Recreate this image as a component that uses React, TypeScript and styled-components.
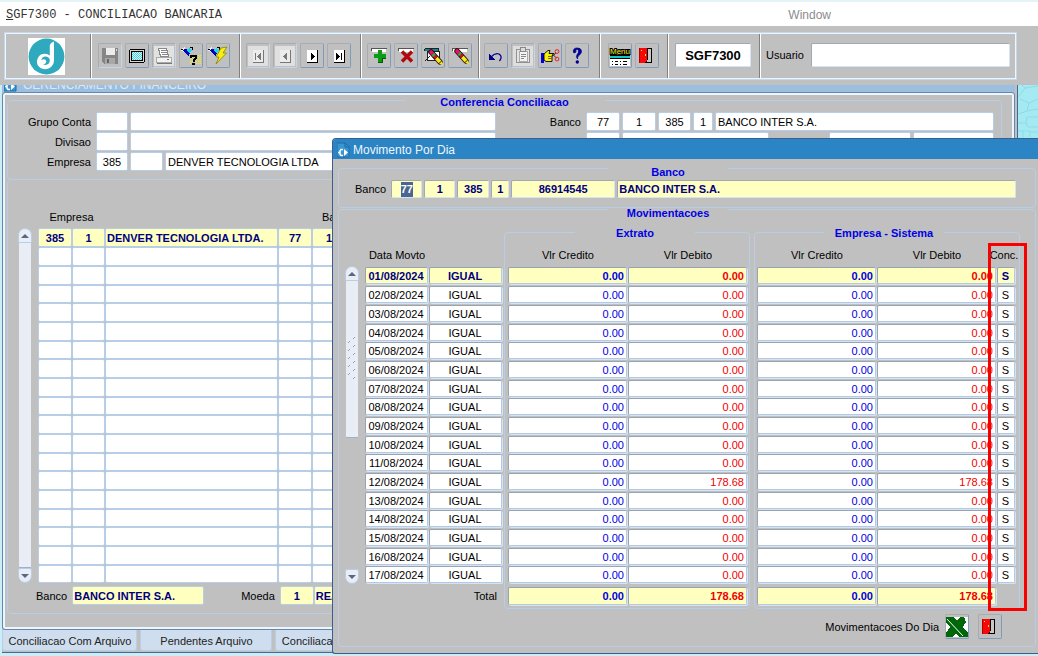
import React from "react";
import styled, { createGlobalStyle, css } from "styled-components";

const GREY = "#c0c0c0";
const LINE = "#b8cde6";

const Global = createGlobalStyle`
  * { box-sizing: border-box; }
  body { margin: 0; background: ${GREY}; font: 11px/12px "Liberation Sans", Arial, sans-serif; color: #000; }
  input, button { font: inherit; color: inherit; margin: 0; }
  fieldset { min-width: 0; margin: 0; padding: 0; }
  table { border-collapse: separate; border-spacing: 0; table-layout: fixed; }
  th { font-weight: normal; }
  td, th { padding: 0; }
  svg { display: block; flex: none; }
`;

const Page = styled.div`
  display: flex;
  flex-direction: column;
  min-height: 100vh;
  overflow: hidden;
`;

const MenuBar = styled.header`
  display: flex;
  align-items: center;
  height: 26px;
  padding: 2px 6px 0;
  border-top: 2px solid #e4f4f6;
  background: #fff;
`;
const MenuTitle = styled.h1`
  flex: 1;
  margin: 0;
  font: 12px/14px "Liberation Mono", "Courier New", monospace;
  color: #333;
`;
const WindowMenu = styled.button`
  flex: none;
  margin-right: 201px;
  padding: 0;
  border: 0;
  background: none;
  font-size: 12px;
  line-height: 14px;
  color: #8c8c8c;
`;

const ToolBar = styled.div`
  display: flex;
  height: 48px;
  margin: 6px 21px 5px 4px;
  border: 1px solid #c3d8ee;
  box-shadow: inset 0 0 0 1px #eef5fb;
  padding: 1px;
`;
const ToolGroup = styled.div<{ $w?: number; $pad?: number }>`
  display: flex;
  align-items: flex-start;
  gap: 3px;
  ${(p) => (p.$w ? `width: ${p.$w}px; flex: none;` : "flex: 1;")}
  padding: 9px 0 0 ${(p) => p.$pad ?? 6}px;
  & + & { border-left: 1px solid #808080; box-shadow: inset 1px 0 0 #fff; }
`;
const LogoBox = styled.div`
  width: 37px;
  height: 37px;
  margin-top: -5px;
`;
const ToolButton = styled.button<{ $off?: boolean }>`
  display: grid;
  place-items: center;
  flex: none;
  width: 24px;
  height: 25px;
  padding: 0;
  border: 1px solid;
  border-color: ${(p) => (p.$off ? "#a8acb0 #c3d5e8 #c3d5e8 #a8acb0" : "#a8acb0 #7d9cbd #7d9cbd #a8acb0")};
  border-radius: 2px;
  background: ${GREY};
`;

const Field = styled.input<{ $w?: number; $h?: number; $hot?: boolean; $center?: boolean; $sunk?: boolean; $big?: boolean }>`
  display: block;
  ${(p) => (p.$w ? `width: ${p.$w}px; flex: none;` : "flex: 1; width: 0;")}
  height: ${(p) => p.$h ?? 19}px;
  padding: 0 ${(p) => (p.$hot ? 1 : 2)}px;
  border: 1px solid ${LINE};
  border-radius: 2px;
  outline: 0;
  background: ${(p) => (p.$hot ? "#ffffc0" : "#fff")};
  text-align: ${(p) => (p.$center ? "center" : "left")};
  ${(p) => p.$hot && css`font-weight: bold; color: #000080;`}
  ${(p) => p.$sunk && css`border-color: #a0a8b2 #d5e4f3 #d5e4f3 #a0a8b2;`}
  ${(p) => p.$big && css`font-size: 13px; font-weight: bold;`}
`;

const UserLabel = styled.label`
  display: flex;
  align-items: center;
  gap: 7px;
  flex: 1;
  padding-right: 5px;
`;

const Desktop = styled.main`
  position: relative;
  flex: 1;
  display: flex;
  padding-left: 2px;
  overflow: hidden;
  background: #c9eef5;
`;
const MainWindow = styled.section`
  display: flex;
  flex-direction: column;
  flex: 1;
  min-width: 0;
  align-self: flex-start;
  padding-right: 2px;
  border: solid #466a96;
  border-width: 0 1px 1px 0;
  background: ${GREY};
`;
const ClippedTitle = styled.div`
  display: flex;
  align-items: flex-end;
  gap: 6px;
  height: 7px;
  padding-left: 2px;
  overflow: hidden;
  background: #9cbfdf;
  color: #dbe9f5;
  font-size: 12px;
  line-height: 14px;
`;
const WindowBody = styled.div`
  padding: 2px 12px 15px 4px;
  border: 1px solid #6687ad;
  border-radius: 3px;
  box-shadow: inset 0 0 0 2px #eef5fb;
`;

const Group = styled.fieldset<{ $up?: number; $w?: number }>`
  margin-top: ${(p) => -(p.$up ?? 0)}px;
  ${(p) => p.$w && `width: ${p.$w}px; flex: none;`}
  border: 1px solid ${LINE};
  border-radius: 4px;
`;
const Legend = styled.legend<{ $w: number; $drop?: number; $left?: number }>`
  width: ${(p) => p.$w}px;
  margin-left: ${(p) => (p.$left === undefined ? "auto" : `${p.$left}px`)};
  margin-right: auto;
  padding: ${(p) => p.$drop ?? 0}px 0 0;
  color: #0000e6;
  font-weight: bold;
  text-align: center;
`;

const Columns = styled.div`
  display: flex;
  justify-content: space-between;
  padding: 4px 7px 8px 0;
`;
const Stack = styled.div`
  display: flex;
  flex-direction: column;
  gap: 1px;
`;
const Line = styled.div<{ $gap?: number }>`
  display: flex;
  align-items: center;
  gap: ${(p) => p.$gap ?? 2}px;
`;
const Caption = styled.label<{ $w?: number }>`
  flex: none;
  ${(p) => p.$w && `width: ${p.$w}px;`}
  padding-right: 3px;
  text-align: right;
  white-space: nowrap;
`;
const Spacer = styled.span<{ $w: number }>`
  flex: none;
  width: ${(p) => p.$w}px;
`;

const BackPanel = styled.section`
  margin-top: -1px;
  padding-bottom: 8px;
  border: 1px solid ${LINE};
  border-radius: 4px;
  overflow: hidden;
`;
const GridArea = styled.div`
  display: flex;
  align-items: stretch;
  gap: 6px;
  padding-left: 10px;
`;
const Bar = styled.div<{ $top: number }>`
  display: flex;
  flex-direction: column;
  flex: none;
  width: 14px;
  margin-top: ${(p) => p.$top}px;
`;
const BarArrow = styled.button<{ $down?: boolean }>`
  display: grid;
  place-items: center;
  flex: none;
  height: 15px;
  padding: 0;
  border: 1px solid ${LINE};
  border-radius: ${(p) => (p.$down ? "2px 2px 7px 7px" : "7px 7px 1px 1px")};
  background: #e8edf6;
`;
const BarThumb = styled.div<{ $h?: number }>`
  display: grid;
  place-items: center;
  ${(p) => (p.$h ? `height: ${p.$h}px;` : "flex: 1;")}
  margin: 0 1px;
  border-bottom: 1px solid #9fb2cc;
  background: #e8edf6;
`;
const BarRest = styled.div`
  flex: none;
  height: 131px;
`;

const Sheet = styled.table<{ $w: number }>`
  width: ${(p) => p.$w}px;
  flex: none;
  tbody tr { height: 19px; }
  tbody tr:nth-child(3n + 4) { height: 18px; }
`;
const Head = styled.th<{ $h: number; $left?: number }>`
  height: ${(p) => p.$h}px;
  padding: 0 0 5px ${(p) => p.$left ?? 0}px;
  vertical-align: bottom;
  text-align: ${(p) => (p.$left ? "left" : "center")};
  white-space: nowrap;
`;
const PlainCell = styled.td`
  height: inherit;
  input { width: 100%; height: 100%; min-height: 18px; }
`;
const SunkCell = styled.td`
  padding: 1px 1px 0 0;
  vertical-align: top;
`;
const FootCell = styled.td`
  height: 21px;
  padding-right: 1px;
  vertical-align: bottom;
`;
const TotalCell = styled.td`
  height: 21px;
  padding: 2px 6px 0 0;
  text-align: right;
`;
const CellInput = styled.input<{ $tone?: "credit" | "debit"; $hot?: boolean; $tall?: boolean }>`
  display: block;
  width: 100%;
  height: ${(p) => (p.$tall ? 18 : 17)}px;
  padding: 0 ${(p) => (p.$tone ? 2 : 1)}px 0 0;
  border: 1px solid;
  border-color: #9aa4b0 #b4cae4 #b4cae4 #9aa4b0;
  border-radius: 2px;
  outline: 0;
  box-shadow: 1px 1px 0 #d6e4f2;
  background: ${(p) => (p.$hot ? "#ffffc0" : "#fff")};
  text-align: ${(p) => (p.$tone ? "right" : "center")};
  font-weight: ${(p) => (p.$hot ? "bold" : "normal")};
  color: ${(p) => (p.$tone === "credit" ? "#0000e0" : p.$tone === "debit" ? "#f00000" : p.$hot ? "#000080" : "#000")};
`;
const ConcText = styled.span`
  display: flex;
  justify-content: center;
  margin-right: 5px;
`;

const BottomLine = styled(Line)`
  padding: 3px 0 0 28px;
`;
const Tabs = styled.nav`
  display: flex;
  gap: 3px;
  padding-bottom: 1px;
`;
const Tab = styled.button<{ $w: number }>`
  flex: none;
  width: ${(p) => p.$w}px;
  height: 21px;
  padding: 1px 0 0 1px;
  border: 1px solid ${LINE};
  border-top: 0;
  border-radius: 0 0 3px 3px;
  background: #cfdeee;
  color: #222;
`;

const Dialog = styled.section`
  position: absolute;
  top: 53px;
  left: 332px;
  right: 0;
  border: 1px solid #3a5f8f;
  border-right: 0;
  border-radius: 4px 0 0 3px;
  background: ${GREY};
  overflow: hidden;
`;
const DialogTitle = styled.h2`
  display: flex;
  align-items: center;
  gap: 3px;
  height: 20px;
  margin: 0;
  padding: 2px 0 0 4px;
  background: #2b84c4;
  color: #eef6fc;
  font-size: 12px;
  font-weight: normal;
  line-height: 14px;
`;
const DialogBody = styled.div`
  padding: 0 2px 6px 5px;
`;
const BankLine = styled(Line)`
  padding: 2px 19px 9px 16px;
`;
const Tables = styled.div`
  display: flex;
  align-items: flex-start;
  padding: 7px 0 0 6px;
`;
const DaySheet = styled(Sheet)`
  margin: 12px 1px 0 6px;
`;
const TableGroup = styled(Group)`
  padding: 0 0 3px ${(p) => (p.$w === 246 ? 3 : 2)}px;
  & + & { margin-left: 4px; }
`;
const DialogFoot = styled.div`
  display: flex;
  justify-content: flex-end;
  align-items: center;
  gap: 9px;
  padding: 5px 33px 7px 0;
`;
const FootLabel = styled.span`
  margin-right: -3px;
`;
const Highlight = styled.div`
  position: absolute;
  left: 655px;
  top: 104px;
  width: 39px;
  height: 368px;
  border: 3px solid #f80000;
`;
const SelectedField = styled.div`
  display: grid;
  place-items: center;
  flex: none;
  width: 31px;
  height: 18px;
  border: 1px solid;
  border-color: #a0a8b2 #d5e4f3 #d5e4f3 #a0a8b2;
  border-radius: 2px;
  background: #ffffc0;
`;
const SelectedInput = styled.input`
  width: 12px;
  height: 15px;
  padding: 0;
  border: 0;
  outline: 0;
  background: #4a6591;
  color: #fff;
  font-weight: bold;
  text-align: center;
`;

/* ---------- drawings ---------- */

const Ico = ({ children, size = 20 }: { children: React.ReactNode; size?: number }) => (
  <svg width={size} height={size} viewBox={`0 0 ${size} ${size}`} shapeRendering="crispEdges" aria-hidden="true">
    {children}
  </svg>
);

const Logo = () => (
  <svg width="37" height="37" viewBox="0 0 37 37" role="img" aria-label="Denver">
    <rect width="37" height="37" fill="#fff" />
    <circle cx="18.5" cy="18.5" r="17.9" fill="#2fa9bd" />
    <path d="M21.800 7.500Q22.500 4.500 26 3.500V23A8.600 8.600 0 0 1 17.400 31.200C12 31.200 8.800 27.500 9 23.500C9.200 19 12.500 15.500 17 15.800Q20 16 21.800 17.500Z" fill="#fff" />
    <path d="M21.800 21.500Q20.500 18.300 17 18.500Q13.500 19 13.400 22.200Q15.500 20.500 17.500 21.800Q19 23.200 17.800 25Q16.800 26.300 15 26.200Q18 27.800 20.500 25.800Q22 24.300 21.800 21.500Z" fill="#2fa9bd" />
  </svg>
);

const Save = () => (
  <Ico><path d="M2 2H18V18H4L2 16Z" fill="#868686" /><rect x="6" y="2" width="9" height="7" fill="#ececec" /><rect x="5" y="12" width="10" height="6" fill="#a8a8a8" /><rect x="7" y="13" width="2" height="4" fill="#666" /><path d="M16.500 3V5" stroke="#ddd" /></Ico>
);
const Screen = () => (
  <Ico><rect x="2" y="3" width="16" height="14" rx="2" fill="#000" /><rect x="3" y="4" width="14" height="12" fill="#d8d8d8" /><rect x="4" y="5" width="12" height="10" fill="#000" /><rect x="5" y="6" width="10" height="8" fill="#f6eef4" />
    {[6, 8, 10, 12].map((y) => <path key={y} d={`M5 ${y}.5H15M6 ${y + 1}.5H15`} stroke="#30dce8" strokeDasharray="1 1" />)}
  </Ico>
);
const Printer = () => (
  <Ico><rect width="20" height="20" fill="#e2e2e2" /><path d="M4.500 2.500H12.500L14.500 10.500H6.500Z" fill="#fff" stroke="#888" /><path d="M7 4.500H12M7 6.500H13M8 8.500H13" stroke="#888" /><path d="M2.500 11.500H17.500V16.500H2.500Z" fill="#f2f2f2" stroke="#aaa" /><path d="M3 17.500H18M13 13.500H15" stroke="#777" /></Ico>
);
const Torch = () => (
  <><path d="M1 2L4 1L3 6L0 5Z" fill="#eee" /><path d="M3 3L6 3L9 6L8 10L5 8L2 5Z" fill="#0000b8" /><path d="M5 4L9 2L11 5L8 7Z" fill="#10dce8" /><path d="M0 3.500H2M9 1.500H11V4" stroke="#000" fill="none" /></>
);
const QueryEnter = () => (
  <Ico>
    {[9, 11, 13, 15, 17].map((y) => <path key={y} d={`M9 ${y}.5H20`} stroke="#f6f010" strokeDasharray="1 1" />)}
    {[10, 12, 14, 16].map((y) => <path key={y} d={`M10 ${y}.5H20`} stroke="#e4dc70" strokeDasharray="1 3" />)}
    <Torch /><path d="M10 12V9.500H15V12L12.500 14V16" fill="none" stroke="#000" strokeWidth="2" /><rect x="11" y="17" width="3" height="2" fill="#000" />
  </Ico>
);
const QueryRun = () => (
  <Ico><Torch /><path d="M13 2L19 1L15 7H18.500L8 18L11 11H8Z" fill="#f8ee10" stroke="#8a8200" strokeWidth="0.800" shapeRendering="auto" /></Ico>
);
const Nav = ({ d, off }: { d: string; off?: boolean }) => (
  <Ico>{off && <rect width="20" height="20" fill="#e0e0e0" />}<rect x="5" y="4" width="10" height="12" fill={off ? "#ececec" : "#fff"} /><path d="M5 16.500H15.500V4" fill="none" stroke={off ? "#777" : "#000"} /><path d={d} fill={off ? "#777" : "#000"} /></Ico>
);
const Strip = () => (
  <><path d="M2 5V2.500H18" fill="none" stroke="#555" /><rect x="3" y="3" width="14" height="3" fill="#fff" /></>
);
const Insert = () => (
  <Ico><Strip /><path d="M9 4H13V8H17V12H13V16H9V12H5V8H9Z" fill="#0a9c14" /><path d="M13 12.500H17M9 16.500H13.500V12" stroke="#045c08" fill="none" /></Ico>
);
const Remove = () => (
  <Ico><Strip /><path d="M6 5.500L16 15.500M16 5.500L6 15.500" stroke="#b00810" strokeWidth="3.500" shapeRendering="auto" /></Ico>
);
const Pencil = () => (
  <g shapeRendering="auto"><path d="M6 5L15 15" stroke="#301010" strokeWidth="5.500" strokeLinecap="round" /><path d="M6 5L9 8.300" stroke="#e8106c" strokeWidth="3.600" strokeLinecap="round" /><path d="M8 7.200L9.300 8.700" stroke="#10c030" strokeWidth="3.600" /><path d="M9.800 9.200L11 10.500" stroke="#d81020" strokeWidth="3.600" /><path d="M11.300 11L15 15" stroke="#f4ec20" strokeWidth="3.600" /><path d="M14 17L18 18L17 14Z" fill="#f4ec20" /></g>
);
const ClearBlock = () => (
  <Ico><path d="M1.500 2.500H15.500V5M1.500 2.500V5" fill="none" stroke="#222" /><rect x="2" y="3" width="13" height="2" fill="#0a8a90" /><rect x="4.500" y="5.500" width="12" height="9" fill="#fff" stroke="#222" /><path d="M2 15L7 10" stroke="#222" /><g transform="translate(2 1)"><Pencil /></g></Ico>
);
const ClearLine = () => (
  <Ico><Strip /><g transform="translate(1 0)"><Pencil /></g></Ico>
);
const Undo = () => (
  <Ico><path d="M5 11Q9 6.500 13 8Q17 10.500 13.500 15" fill="none" stroke="#000090" strokeWidth="1.300" shapeRendering="auto" /><path d="M3 8V14H9Z" fill="#000090" /></Ico>
);
const Paste = () => (
  <Ico><rect width="20" height="20" fill="#dedede" /><rect x="3.500" y="3.500" width="13" height="13" rx="1" fill="#e4e4e4" stroke="#929292" /><rect x="6.500" y="5.500" width="8" height="10" fill="#f4f4f4" stroke="#aaa" /><rect x="7.500" y="1.500" width="5" height="4" fill="#ddd" stroke="#888" /><path d="M8 8.500H13M8 10.500H13M8 12.500H11" stroke="#888" /></Ico>
);
const HandCut = () => (
  <Ico><rect x="1" y="7" width="3" height="10" fill="#0000d8" /><path d="M4 8L8 4.500H10L9 7.500H14V9.500H12V15.500H6L4 14Z" fill="#f6ee10" stroke="#000" strokeWidth="0.900" shapeRendering="auto" /><path d="M8 10.500H12M8 12.500H12" stroke="#806800" /><path d="M12 10.500L16 7M12 8L16.500 12" stroke="#444" shapeRendering="auto" /><circle cx="17" cy="5.500" r="1.900" fill="none" stroke="#f02020" shapeRendering="auto" /><circle cx="17" cy="13" r="1.900" fill="none" stroke="#f02020" shapeRendering="auto" /></Ico>
);
const Help = () => (
  <Ico><g shapeRendering="auto"><path d="M6.500 6.500Q5.500 2 10.500 2Q14.500 2.200 14.500 5.500Q14.300 8 11.500 9.800Q10.300 10.700 10.500 13Q8.800 10.500 10 8.800Q11.800 7 11.700 5Q11.500 3.200 9.800 3.200Q8.300 3.400 8.900 5.600Q8.300 7.800 6.500 6.500Z" fill="#000090" stroke="#000090" strokeWidth="0.800" /><circle cx="10.300" cy="16" r="1.700" fill="#000090" /></g></Ico>
);
const MenuIcon = () => (
  <svg width="22" height="22" viewBox="0 0 22 22" overflow="visible" aria-hidden="true">
    <text x="1" y="9" fontFamily="Liberation Sans" fontSize="8" fill="#f4ec20" stroke="#000" strokeWidth="2" paintOrder="stroke">Menu</text>
    <g shapeRendering="crispEdges"><rect x="1" y="11" width="20" height="10" fill="#fff" /><path d="M1 10.500H21M1 13.500H21" stroke="#000" /><rect x="1" y="11" width="20" height="2" fill="#10c8c8" /><path d="M3 16.500H4M6 16.500H9M11 16.500H12M14 16.500H18M3 19.500H4M6 19.500H9M11 19.500H12M14 19.500H18" stroke="#000" /></g>
  </svg>
);
const Door = () => (
  <Ico><rect x="3" y="2" width="12" height="15" fill="#000" /><rect x="10" y="3" width="4" height="13" fill="#c8c8c8" /><path d="M3 2H10V14L7 17H3Z" fill="#f80808" /><path d="M10.500 3V14" stroke="#000" /><path d="M2.500 2V17" stroke="#b00000" /><rect x="8" y="8" width="1" height="2" fill="#ffe820" /><rect x="4" y="4" width="1" height="1" fill="#ffe820" /></Ico>
);
const Excel = () => (
  <Ico size={22}><rect y="1" width="22" height="20" fill="#00680a" /><path d="M8 1H14L11 5ZM0 7L4 11L0 17ZM22 1V17L17 11L20 6L18 1ZM7 21L10 17L13 21Z" fill="#fff" /><path d="M1 3L17 20" stroke="#fff" shapeRendering="auto" /></Ico>
);
const FormIcon = () => (
  <svg width="13" height="16" viewBox="0 0 13 16" aria-hidden="true"><path d="M0 1H8L12 5V15H0Z" fill="#3a96d2" stroke="#1f6ca8" /><path d="M8 1V5H12" fill="none" stroke="#1868a4" /><path d="M1 10.500H3M6 7.500H4L3 9V12L4 13.500H6" fill="none" stroke="#fff" strokeWidth="1.500" /><path d="M7 7V14L11 10.500Z" fill="#fff" /></svg>
);
const Arrow = ({ down }: { down?: boolean }) => (
  <svg width="8" height="4" viewBox="0 0 8 4" aria-hidden="true"><path d={down ? "M0 0H8L4 4Z" : "M0 4H8L4 0Z"} fill="#5c6680" /></svg>
);
const Grip = () => (
  <svg width="10" height="44" viewBox="0 0 10 44" aria-hidden="true">
    {[0, 1, 2, 3, 4, 5].map((i) => (
      <g key={i} stroke="#8fa2c0"><path d={`M6 ${2 + i * 8}L8 ${i * 8}`} />{i < 5 && <path d={`M1 ${6 + i * 8}L3 ${4 + i * 8}`} />}</g>
    ))}
  </svg>
);
const Wallpaper = () => (
  <svg width="20" height="54" viewBox="0 0 20 54" aria-hidden="true"><rect width="20" height="54" fill="#a5eaf3" /><path d="M0 12L7 3L20 1M7 3L4 0M2 14L11 18L20 14M11 18L9 26L0 29M9 26L20 24M0 38H8L10 42H20M8 38L9 32H20M0 46H12V52M5 46V54M12 47H20" fill="none" stroke="#8fdae5" /></svg>
);

/* ---------- data ---------- */

const days = Array.from({ length: 17 }, (_, i) => ({
  date: `${String(i + 1).padStart(2, "0")}/08/2024`,
  debit: i === 11 ? "178.68" : "0.00",
}));
const backColumns = [34, 33, 173, 34, 34, 34, 34, 240, 100];
const firstRow = ["385", "1", "DENVER TECNOLOGIA LTDA.", "77", "1", "385", "1", "BANCO INTER S.A.", ""];

type Tool = [string, React.ReactNode, boolean?];
const groups: { w: number; pad?: number; tools: Tool[] }[] = [
  { w: 149, pad: 7, tools: [["Salvar", <Save />, true], ["Tela", <Screen />], ["Imprimir", <Printer />, true], ["Entrar consulta", <QueryEnter />], ["Executar consulta", <QueryRun />]] },
  { w: 121, pad: 6, tools: [["Primeiro", <Nav off d="M7 7H8V14H7ZM13 7V14L9 10.500Z" />, true], ["Anterior", <Nav off d="M12 7V14L8 10.500Z" />, true], ["Proximo", <Nav d="M9 7V14L13 10.500Z" />], ["Ultimo", <Nav d="M7 7V14L11 10.500ZM12 7H13V14H12Z" />]] },
  { w: 118, pad: 6, tools: [["Inserir", <Insert />], ["Remover", <Remove />], ["Limpar bloco", <ClearBlock />], ["Limpar registro", <ClearLine />]] },
  { w: 121, pad: 5, tools: [["Desfazer", <Undo />], ["Colar", <Paste />, true], ["Recortar", <HandCut />], ["Ajuda", <Help />]] },
  { w: 68, pad: 8, tools: [["Menu", <MenuIcon />], ["Sair", <Door />]] },
];

function Values({ title, conc }: { title: string; conc?: boolean }) {
  return (
    <Sheet $w={conc ? 259 : 240} aria-label={title}>
      <colgroup><col style={{ width: 120 }} /><col style={{ width: 120 }} />{conc && <col />}</colgroup>
      <thead><tr><Head $h={27}>Vlr Credito</Head><Head $h={27}>Vlr Debito</Head>{conc && <Head $h={27}><ConcText>Conc.</ConcText></Head>}</tr></thead>
      <tbody>
        {days.map((d, i) => (
          <tr key={d.date}>
            <SunkCell><CellInput readOnly aria-label={`Vlr Credito ${d.date}`} $tone="credit" $hot={!i} value="0.00" /></SunkCell>
            <SunkCell><CellInput readOnly aria-label={`Vlr Debito ${d.date}`} $tone="debit" $hot={!i} value={d.debit} /></SunkCell>
            {conc && <SunkCell><CellInput readOnly aria-label={`Conc. ${d.date}`} $hot={!i} value="S" /></SunkCell>}
          </tr>
        ))}
      </tbody>
      <tfoot><tr>
        <FootCell><CellInput readOnly aria-label="Total credito" $tall $hot $tone="credit" value="0.00" /></FootCell>
        <FootCell><CellInput readOnly aria-label="Total debito" $tall $hot $tone="debit" value="178.68" /></FootCell>
      </tr></tfoot>
    </Sheet>
  );
}

export default function App() {
  return (
    <Page>
      <Global />
      <MenuBar>
        <MenuTitle><u>S</u>GF7300 - CONCILIACAO BANCARIA</MenuTitle>
        <WindowMenu>Window</WindowMenu>
      </MenuBar>

      <ToolBar>
        <ToolGroup $w={84} $pad={22}><LogoBox><Logo /></LogoBox></ToolGroup>
        {groups.map((g, i) => (
          <ToolGroup key={i} $w={g.w} $pad={g.pad}>
            {g.tools.map(([name, icon, off]) => <ToolButton key={name} aria-label={name} $off={off}>{icon}</ToolButton>)}
          </ToolGroup>
        ))}
        <ToolGroup $w={92} $pad={7}><Field readOnly aria-label="Programa" $w={76} $h={24} $sunk $center $big value="SGF7300" /></ToolGroup>
        <ToolGroup $pad={6}><UserLabel>Usuario<Field $h={24} $sunk /></UserLabel></ToolGroup>
      </ToolBar>

      <Desktop>
        <MainWindow>
          <ClippedTitle><FormIcon />GERENCIAMENTO FINANCEIRO</ClippedTitle>
          <WindowBody>
            <Group $up={3}>
              <Legend $w={200} $drop={4}>Conferencia Conciliacao</Legend>
              <Columns>
                <Stack>
                  <Line><Caption $w={86} htmlFor="grupo">Grupo Conta</Caption><Field id="grupo" $w={32} /><Field aria-label="Nome do grupo" $w={366} /></Line>
                  <Line><Caption $w={86} htmlFor="divisao">Divisao</Caption><Field id="divisao" $w={32} /><Field aria-label="Nome da divisao" $w={366} /></Line>
                  <Line><Caption $w={86} htmlFor="empresa">Empresa</Caption><Field id="empresa" $w={32} $center defaultValue="385" /><Field aria-label="Filial" $w={33} /><Field aria-label="Nome da empresa" $w={331} defaultValue="DENVER TECNOLOGIA LTDA" /></Line>
                </Stack>
                <Stack>
                  <Line><Caption $w={35} htmlFor="banco">Banco</Caption><Field id="banco" $w={34} $center defaultValue="77" /><Field aria-label="Agencia" $w={34} $center defaultValue="1" /><Field aria-label="Conta" $w={33} $center defaultValue="385" /><Field aria-label="Digito" $w={20} $center defaultValue="1" /><Field aria-label="Nome do banco" $w={279} defaultValue="BANCO INTER S.A." /></Line>
                  <Line><Spacer $w={35} /><Field aria-label="Moeda" $w={34} /><Field aria-label="Nome da moeda" $w={147} /><Spacer $w={56} /><Field aria-label="Data inicial" $w={82} /><Field aria-label="Data final" $w={81} /></Line>
                </Stack>
              </Columns>
            </Group>
            <BackPanel>
              <GridArea>
                <Bar $top={48}>
                  <BarArrow aria-label="Subir"><Arrow /></BarArrow>
                  <BarThumb />
                  <BarArrow $down aria-label="Descer"><Arrow down /></BarArrow>
                </Bar>
                <Sheet $w={716} aria-label="Contas">
                  <colgroup>{backColumns.map((w, i) => <col key={i} style={{ width: w }} />)}</colgroup>
                  <thead><tr><Head $h={48} colSpan={2}>Empresa</Head><th /><Head $h={48} colSpan={2} $left={44}>Banco</Head><th colSpan={4} /></tr></thead>
                  <tbody>
                    {Array.from({ length: 19 }, (_, r) => (
                      <tr key={r}>
                        {backColumns.map((_w, c) => (
                          <PlainCell key={c}><Field readOnly aria-label={`Linha ${r + 1} coluna ${c + 1}`} $hot={!r} $center={c !== 2 && c !== 7} value={r ? "" : firstRow[c]} /></PlainCell>
                        ))}
                      </tr>
                    ))}
                  </tbody>
                </Sheet>
              </GridArea>
              <BottomLine>
                <Caption htmlFor="nomebanco">Banco</Caption>
                <Field id="nomebanco" readOnly $hot $w={132} value="BANCO INTER S.A." />
                <Spacer $w={33} />
                <Caption htmlFor="moeda">Moeda</Caption>
                <Line $gap={0}><Field id="moeda" readOnly $hot $center $w={34} value="1" /><Field readOnly aria-label="Descricao da moeda" $hot $w={120} value="REAL" /></Line>
              </BottomLine>
            </BackPanel>
          </WindowBody>
          <Tabs>
            <Tab $w={135}>Conciliacao Com Arquivo</Tab>
            <Tab $w={132}>Pendentes Arquivo</Tab>
            <Tab $w={135}>Conciliacao Sem Arquivo</Tab>
          </Tabs>
        </MainWindow>
        <Wallpaper />

        <Dialog role="dialog" aria-label="Movimento Por Dia">
          <DialogTitle><FormIcon />Movimento Por Dia</DialogTitle>
          <DialogBody>
            <Group $up={1}>
              <Legend $w={120} $drop={8} $left={269}>Banco</Legend>
              <BankLine>
                <Caption htmlFor="diabanco">Banco</Caption>
                <SelectedField><SelectedInput id="diabanco" readOnly value="77" /></SelectedField>
                <Field readOnly aria-label="Agencia" $hot $sunk $center $w={31} $h={18} value="1" />
                <Field readOnly aria-label="Conta" $hot $sunk $center $w={32} $h={18} value="385" />
                <Field readOnly aria-label="Digito" $hot $sunk $center $w={18} $h={18} value="1" />
                <Field readOnly aria-label="Numero" $hot $sunk $center $w={104} $h={18} value="86914545" />
                <Field readOnly aria-label="Nome do banco" $hot $sunk $h={18} value="BANCO INTER S.A." />
              </BankLine>
            </Group>
            <Group $up={9}>
              <Legend $w={120} $drop={8} $left={269}>Movimentacoes</Legend>
              <Tables>
                <Bar $top={40}>
                  <BarArrow aria-label="Subir"><Arrow /></BarArrow>
                  <BarThumb $h={157}><Grip /></BarThumb>
                  <BarRest />
                  <BarArrow $down aria-label="Descer"><Arrow down /></BarArrow>
                </Bar>
                <DaySheet $w={138} aria-label="Dias">
                  <colgroup><col style={{ width: 64 }} /><col /></colgroup>
                  <thead><tr><Head $h={28}>Data Movto</Head><th /></tr></thead>
                  <tbody>
                    {days.map((d, i) => (
                      <tr key={d.date}>
                        <SunkCell><CellInput readOnly aria-label="Data Movto" $hot={!i} value={d.date} /></SunkCell>
                        <SunkCell><CellInput readOnly aria-label={`Situacao ${d.date}`} $hot={!i} value="IGUAL" /></SunkCell>
                      </tr>
                    ))}
                  </tbody>
                  <tfoot><tr><td /><TotalCell>Total</TotalCell></tr></tfoot>
                </DaySheet>
                <TableGroup $w={246} $up={1}><Legend $w={120} $drop={2} $left={67}>Extrato</Legend><Values title="Extrato" /></TableGroup>
                <TableGroup $w={266} $up={1}><Legend $w={120} $drop={2} $left={67}>Empresa - Sistema</Legend><Values title="Empresa - Sistema" conc /></TableGroup>
              </Tables>
              <DialogFoot>
                <FootLabel>Movimentacoes Do Dia</FootLabel>
                <ToolButton aria-label="Exportar planilha"><Excel /></ToolButton>
                <ToolButton aria-label="Fechar"><Door /></ToolButton>
              </DialogFoot>
            </Group>
          </DialogBody>
          <Highlight />
        </Dialog>
      </Desktop>
    </Page>
  );
}
